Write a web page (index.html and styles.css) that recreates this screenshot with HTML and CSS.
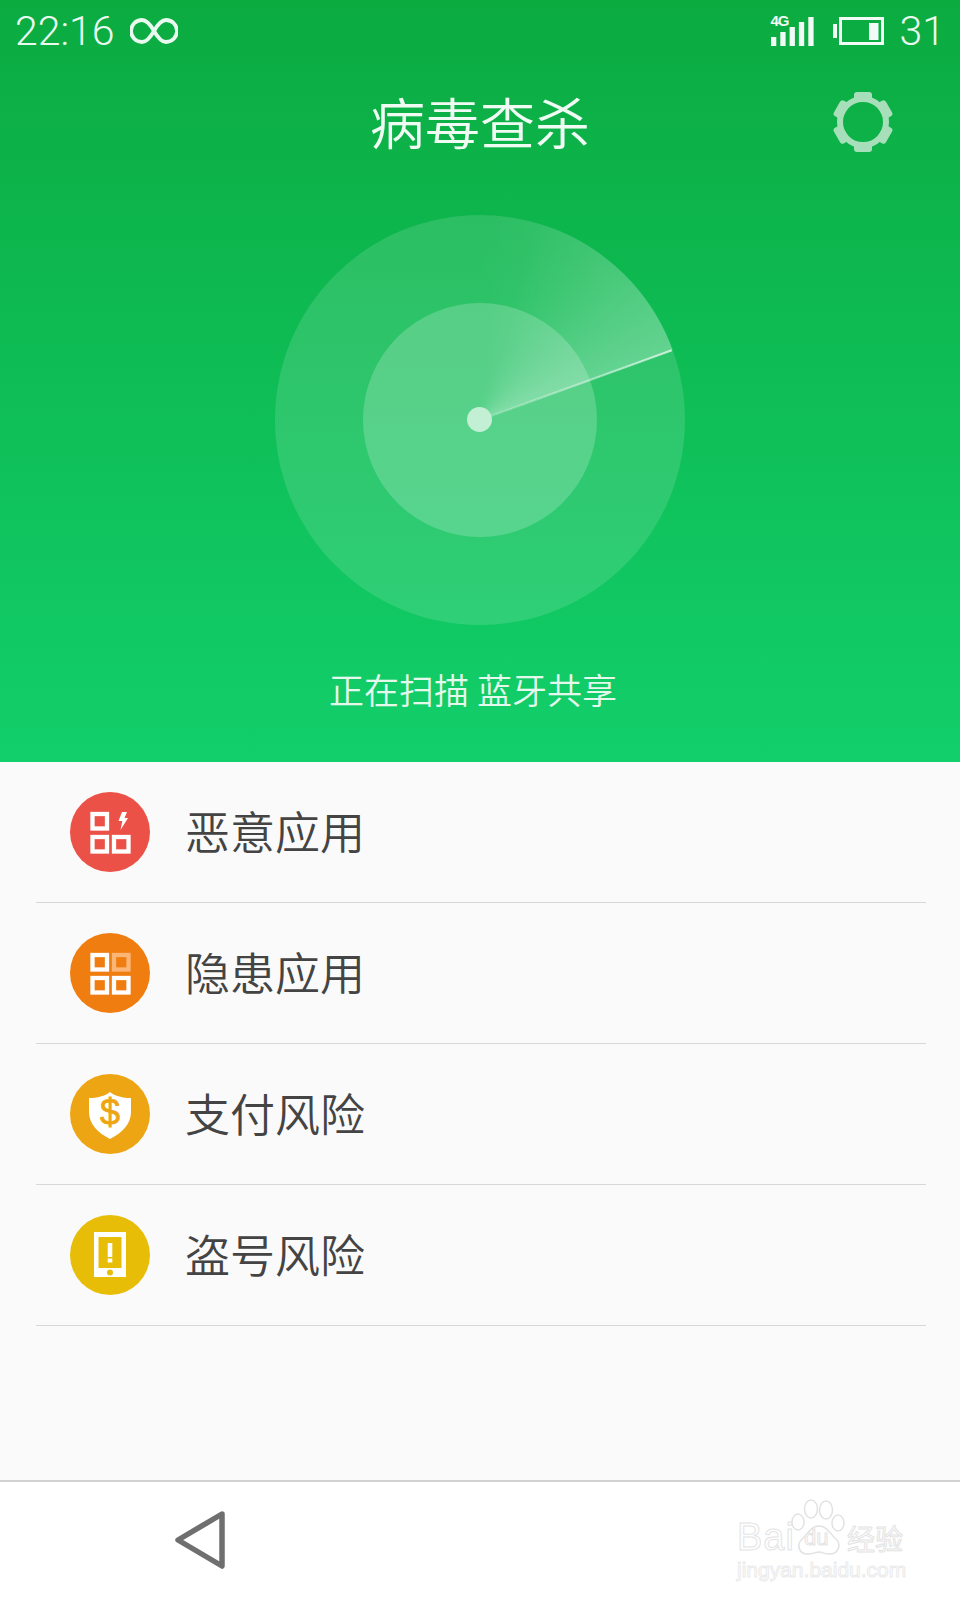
FILE: index.html
```html
<!DOCTYPE html>
<html lang="zh-CN">
<head>
  <meta charset="UTF-8">
  <meta name="viewport" content="width=device-width, initial-scale=1.0">
  <title>病毒查杀</title>
  <link rel="stylesheet" href="styles.css">
</head>
<body>
  <div class="page">
    <header class="scan-header">
      <div class="status-bar">
        <div class="status-group">
          <span class="status-text">22:16</span>
          <svg class="icon-infinity" width="48" height="26" viewBox="0 0 48 26">
            <path d="M24 13C20 6 16 2 12 2a11 11 0 0 0 0 22c4 0 8-4 12-11s8-11 12-11a11 11 0 0 1 0 22c-4 0-8-4-12-11z" fill="none" stroke="#eafaf0" stroke-width="3.800"/>
          </svg>
        </div>
        <div class="status-group status-right">
          <div class="signal">
            <span class="signal-label">4G</span>
            <svg width="43" height="29" viewBox="0 0 43 29">
              <g fill="#f2fbf5">
                <rect x="0" y="20" width="5.300" height="9"/>
                <rect x="9.300" y="15" width="5.300" height="14"/>
                <rect x="18.600" y="10" width="5.300" height="19"/>
                <rect x="27.900" y="5" width="5.300" height="24"/>
                <rect x="37.300" y="0" width="5.300" height="29"/>
              </g>
            </svg>
          </div>
          <svg width="51" height="28" viewBox="0 0 51 28">
            <rect x="7.500" y="1.500" width="42" height="25" fill="none" stroke="#f2fbf5" stroke-width="3"/>
            <rect x="0" y="7" width="4" height="14" fill="#f2fbf5"/>
            <rect x="36" y="6" width="9.500" height="17" fill="#f2fbf5"/>
          </svg>
          <span class="status-text">31</span>
        </div>
      </div>

      <div class="title-row">
        <span></span>
        <h1 class="title">病毒查杀</h1>
        <svg class="gear" width="62" height="62" viewBox="0 0 62 62">
          <g fill="#a6dfba">
            <rect x="22" y="1" width="18" height="10" rx="3"/>
            <rect x="22" y="1" width="18" height="10" rx="3" transform="rotate(60 31 31)"/>
            <rect x="22" y="1" width="18" height="10" rx="3" transform="rotate(120 31 31)"/>
            <rect x="22" y="1" width="18" height="10" rx="3" transform="rotate(180 31 31)"/>
            <rect x="22" y="1" width="18" height="10" rx="3" transform="rotate(240 31 31)"/>
            <rect x="22" y="1" width="18" height="10" rx="3" transform="rotate(300 31 31)"/>
          </g>
          <circle cx="31" cy="31" r="23" fill="none" stroke="#a6dfba" stroke-width="6"/>
        </svg>
      </div>

      <div class="radar">
        <div class="radar-inner"></div>
        <div class="radar-sweep"></div>
        <div class="radar-line"></div>
        <div class="radar-dot"></div>
      </div>

      <p class="scan-status">正在扫描 蓝牙共享</p>
    </header>

    <main class="risk-list">
      <div class="risk-row">
        <svg class="risk-icon" width="80" height="80" viewBox="0 0 80 80">
          <circle cx="40" cy="40" r="40" fill="#ec5147"/>
          <g fill="none" stroke="#fff" stroke-width="4.300">
            <rect x="22.500" y="22" width="14.500" height="14.500"/>
            <rect x="22.500" y="45" width="14.500" height="14.500"/>
            <rect x="44" y="45" width="14.500" height="14.500"/>
          </g>
          <path d="M52 20h5l-2.500 6h3.500l-7.500 12 1.800-9h-3.800z" fill="#fff"/>
        </svg>
        <span class="risk-name">恶意应用</span>
      </div>
      <div class="risk-row">
        <svg class="risk-icon" width="80" height="80" viewBox="0 0 80 80">
          <circle cx="40" cy="40" r="40" fill="#f07d0f"/>
          <g fill="none" stroke="#fff" stroke-width="4.300">
            <rect x="22.500" y="22" width="14.500" height="14.500"/>
            <rect x="22.500" y="45" width="14.500" height="14.500"/>
            <rect x="44" y="45" width="14.500" height="14.500"/>
          </g>
          <rect x="44" y="22" width="14.500" height="14.500" fill="none" stroke="#fab577" stroke-width="4.300"/>
        </svg>
        <span class="risk-name">隐患应用</span>
      </div>
      <div class="risk-row">
        <svg class="risk-icon" width="80" height="80" viewBox="0 0 80 80">
          <circle cx="40" cy="40" r="40" fill="#eda514"/>
          <path d="M40 18c5 4 13 6 21 6v14c0 12-9 21-21 27-12-6-21-15-21-27V24c8 0 16-2 21-6z" fill="#fff"/>
          <text class="dollar" x="40" y="51" text-anchor="middle">$</text>
        </svg>
        <span class="risk-name">支付风险</span>
      </div>
      <div class="risk-row">
        <svg class="risk-icon" width="80" height="80" viewBox="0 0 80 80">
          <circle cx="40" cy="40" r="40" fill="#e8bd08"/>
          <rect x="24" y="17" width="32" height="45" fill="#fff"/>
          <rect x="28.500" y="22" width="23" height="31" fill="#e8bd08"/>
          <rect x="37.700" y="28" width="4.600" height="14" fill="#fff"/>
          <rect x="37.700" y="43.500" width="4.600" height="4" fill="#fff"/>
          <circle cx="40" cy="57.500" r="3" fill="#e8bd08"/>
        </svg>
        <span class="risk-name">盗号风险</span>
      </div>
    </main>

    <footer class="nav-bar">
      <svg class="nav-back" width="60" height="70" viewBox="0 0 60 70">
        <path d="M52 11L8 37l44 26z" fill="none" stroke="#6f6f6f" stroke-width="5.500" stroke-linejoin="round"/>
      </svg>
      <div class="watermark">
        <svg class="watermark-paw" width="56" height="64" viewBox="0 0 56 64">
          <g fill="#fff" stroke="#e2e2e2" stroke-width="1.500">
            <ellipse cx="7" cy="24" rx="6" ry="8"/>
            <ellipse cx="20" cy="11" rx="6.500" ry="9"/>
            <ellipse cx="35" cy="12" rx="6.500" ry="9"/>
            <ellipse cx="47" cy="25" rx="6" ry="8"/>
            <path d="M28 28c8 0 11 8 17 13 6 6 2 16-8 15-4 0-6-2-9-2s-6 2-10 2c-10 1-13-9-7-15 6-5 9-13 17-13z"/>
          </g>
        </svg>
        <div class="watermark-top">
          <span class="wm-bai">Bai</span>
          <span class="wm-du">du</span>
          <span class="wm-cn">经验</span>
        </div>
        <div class="wm-url">jingyan.baidu.com</div>
      </div>
    </footer>
  </div>
</body>
</html>
```
FILE: styles.css
```css
* {
  box-sizing: border-box;
}
body {
  margin: 0;
  font-family: "Noto Sans CJK SC", "Noto Sans", sans-serif;
  background-color: #fafafa;
}
.page {
  width: 960px;
  height: 1600px;
  display: flex;
  flex-direction: column;
  overflow: hidden;
}

/* green top part */
.scan-header {
  height: 762px;
  background: linear-gradient(180deg, #0bab40 0%, #12cf6b 100%);
  display: flex;
  flex-direction: column;
  align-items: center;
}
.status-bar {
  width: 100%;
  height: 62px;
  padding: 0 15px 0 15px;
  display: flex;
  justify-content: space-between;
  align-items: center;
}
.status-group {
  display: flex;
  align-items: center;
  gap: 15px;
}
.status-right {
  gap: 16px;
}
.status-text {
  font-family: Roboto, sans-serif;
  font-weight: 300;
  font-size: 41px;
  color: #eafaf0;
}
.signal {
  position: relative;
  display: flex;
  margin-right: 3px;
}
.signal-label {
  position: absolute;
  left: 0;
  top: -4px;
  font-family: "Liberation Sans", sans-serif;
  font-weight: bold;
  font-size: 15px;
  line-height: 16px;
  letter-spacing: -1px;
  color: #f2fbf5;
}
.title-row {
  width: 100%;
  height: 124px;
  padding: 0 55px 4px 65px;
  display: grid;
  grid-template-columns: 1fr auto 1fr;
  align-items: center;
}
.title {
  margin: 0 0 3px;
  font-weight: 350;
  font-size: 55px;
  line-height: 117px;
  color: #effbf3;
  transform: translateX(-5px);
}
.gear {
  justify-self: end;
  margin-right: 11px;
}

/* radar */
.radar {
  position: relative;
  width: 410px;
  height: 410px;
  margin-top: 29px;
  border-radius: 50%;
  background-color: rgba(255, 255, 255, 0.13);
  display: flex;
  align-items: center;
  justify-content: center;
}
.radar-inner {
  width: 234px;
  height: 234px;
  border-radius: 50%;
  background-color: rgba(255, 255, 255, 0.2);
}
.radar-sweep {
  position: absolute;
  inset: 0;
  border-radius: 50%;
  background: conic-gradient(rgba(255, 255, 255, 0) 0deg, rgba(255, 255, 255, 0.02) 15deg, rgba(255, 255, 255, 0.12) 40deg, rgba(255, 255, 255, 0.26) 70deg, rgba(255, 255, 255, 0) 70deg);
}
.radar-line {
  position: absolute;
  left: 205px;
  top: 204px;
  width: 204px;
  height: 1.500px;
  transform-origin: 0 50%;
  transform: rotate(-20deg);
  background: linear-gradient(90deg, rgba(255, 255, 255, 0.15), rgba(255, 255, 255, 0.7));
}
.radar-dot {
  position: absolute;
  left: 192px;
  top: 192px;
  width: 25px;
  height: 25px;
  border-radius: 50%;
  background-color: #c3f0d5;
}
.scan-status {
  margin: 40px 14px 0 0;
  font-weight: 350;
  font-size: 35px;
  line-height: 48px;
  color: #e4f8ec;
}

/* list */
.risk-list {
  flex: 1;
  padding: 0 34px 0 36px;
}
.risk-row {
  height: 141px;
  padding-left: 34px;
  border-bottom: 1.500px solid #d8d8d8;
  display: flex;
  align-items: center;
  gap: 35px;
}
.dollar {
  font-family: "Liberation Sans", sans-serif;
  font-size: 36px;
  fill: #eda514;
  stroke: #eda514;
  stroke-width: 0.8;
}
.risk-name {
  position: relative;
  top: -2px;
  font-weight: 350;
  font-size: 45px;
  color: #444;
}

/* bottom bar */
.nav-bar {
  position: relative;
  height: 120px;
  padding: 0 0 6px 170px;
  border-top: 2px solid #d2d2d2;
  background-color: #fff;
  display: flex;
  align-items: center;
}
.watermark {
  position: absolute;
  left: 737px;
  top: 14px;
  width: 172px;
}
.watermark-paw {
  position: absolute;
  left: 54px;
  top: 2px;
}
.watermark-top {
  position: relative;
  height: 62px;
  padding-top: 21px;
  display: flex;
  align-items: center;
  -webkit-text-stroke: 1px #e4e4e4;
  color: #fff;
  font-family: "Liberation Sans", sans-serif;
}
.wm-bai {
  width: 58px;
  font-size: 38px;
  letter-spacing: 1px;
}
.wm-du {
  width: 52px;
  padding-left: 9px;
  font-size: 22px;
}
.wm-cn {
  font-family: "Noto Sans CJK SC", sans-serif;
  font-size: 28px;
  white-space: nowrap;
}
.wm-url {
  font-family: "Liberation Sans", sans-serif;
  font-size: 21px;
  line-height: 24px;
  color: #fff;
  -webkit-text-stroke: 1px #ebebeb;
  white-space: nowrap;
}
```
